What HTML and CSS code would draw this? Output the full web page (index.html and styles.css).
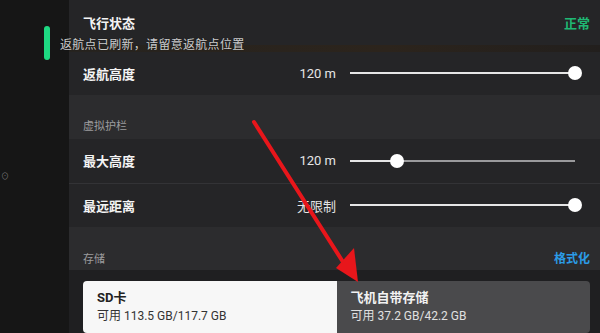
FILE: index.html
```html
<!DOCTYPE html>
<html lang="zh-CN">
<head>
    <meta charset="UTF-8">
    <meta name="viewport" content="width=device-width, initial-scale=1.0">
    <title>安全设置</title>
    <link rel="stylesheet" href="styles.css">
</head>
<body>
    <div class="screen">
        <div class="sidebar">
            <div class="sidebar_mark">⊙</div>
        </div>
        <div class="panel">
            <div class="row status_row">
                <div class="label">飞行状态</div>
                <div class="status">正常</div>
            </div>
            <div class="row_gap"></div>
            <div class="row">
                <div class="label">返航高度</div>
                <div class="value">120 m</div>
                <div class="slider">
                    <div class="track"></div>
                    <div class="fill" style="width: 100%"></div>
                    <div class="thumb" style="left: 100%"></div>
                </div>
            </div>
            <div class="section_head">
                <div class="section_title">虚拟护栏</div>
            </div>
            <div class="row row_line">
                <div class="label">最大高度</div>
                <div class="value">120 m</div>
                <div class="slider">
                    <div class="track"></div>
                    <div class="fill" style="width: 21%"></div>
                    <div class="thumb" style="left: 21%"></div>
                </div>
            </div>
            <div class="row">
                <div class="label">最远距离</div>
                <div class="value">无限制</div>
                <div class="slider">
                    <div class="track"></div>
                    <div class="fill" style="width: 100%"></div>
                    <div class="thumb" style="left: 100%"></div>
                </div>
            </div>
            <div class="section_head storage_head">
                <div class="section_title">存储</div>
                <div class="format">格式化</div>
            </div>
            <div class="storage">
                <div class="seg seg_active">
                    <div class="seg_title">SD卡</div>
                    <div class="seg_sub">可用 113.5 GB/117.7 GB</div>
                </div>
                <div class="seg">
                    <div class="seg_title">飞机自带存储</div>
                    <div class="seg_sub">可用 37.2 GB/42.2 GB</div>
                </div>
            </div>
        </div>
    </div>

    <!-- toast over the panel -->
    <div class="toast">
        <div class="toast_bar"></div>
        <div class="toast_text">返航点已刷新，请留意返航点位置</div>
    </div>

    <!-- red annotation arrow -->
    <svg class="arrow" width="600" height="333" viewBox="0 0 600 333">
        <line x1="254" y1="122" x2="343" y2="262" stroke="#e8161b" stroke-width="4" stroke-linecap="round"/>
        <polygon points="336,268 354,248 358,282" fill="#e8161b"/>
    </svg>
</body>
</html>
```

FILE: styles.css
```css
body {
    margin: 0;
    width: 600px;
    height: 333px;
    overflow: hidden;
    background-color: #151515;
    font-family: Roboto, "Noto Sans CJK SC", sans-serif;
    color: #f2f2f2;
}

.screen {
    display: flex;
    height: 333px;
}

.sidebar {
    width: 69px;
    background-color: #161616;
    display: flex;
    align-items: center;
}
.sidebar_mark {
    font-size: 8px;
    color: #777;
    margin-left: 1px;
    margin-top: 18px;
}

.panel {
    flex: 1;
    display: flex;
    flex-direction: column;
    background-color: #1f1f21;
}

.row {
    display: flex;
    align-items: center;
    height: 44px;
    padding: 0 8px 0 14px;
    background-color: #252527;
}
.status_row {
    height: 45px;
    padding-right: 10px;
}
.row_gap {
    height: 7px;
    background: linear-gradient(90deg, #26231f, #2c241c 60%, #221f1d);
}
.row_line {
    border-bottom: 1px solid #333336;
}

.label {
    flex: 1;
    font-size: 13px;
    font-weight: 700;
    color: #f4f4f4;
}
.status {
    font-size: 13px;
    font-weight: 700;
    color: #1fb874;
}
.value {
    width: 70px;
    margin-right: 14px;
    text-align: right;
    font-size: 13px;
    color: #e6e6e6;
}

.slider {
    position: relative;
    width: 225px;
    height: 14px;
    margin-right: 17px;
}
.track {
    position: absolute;
    left: 0;
    right: 0;
    top: 6px;
    height: 2px;
    background-color: #9a9a9c;
}
.fill {
    position: absolute;
    left: 0;
    top: 6px;
    height: 2px;
    background-color: #e6e6e6;
}
.thumb {
    position: absolute;
    top: 0;
    width: 14px;
    height: 14px;
    margin-left: -7px;
    border-radius: 50%;
    background-color: #fff;
}

.section_head {
    display: flex;
    align-items: flex-end;
    height: 44px;
    box-sizing: border-box;
    padding: 0 10px 6px 14px;
    background-color: #2c2c2e;
}
.storage_head {
    height: 43px;
    padding-bottom: 4px;
}
.section_title {
    flex: 1;
    font-size: 11px;
    color: #9c9c9e;
}
.format {
    font-size: 12px;
    font-weight: 700;
    color: #2b9be6;
}

.storage {
    display: flex;
    padding: 11px 10px 0 14px;
}
.seg {
    flex: 1;
    height: 45px;
    padding: 7px 14px 0;
    background-color: #4a4a4c;
    border-radius: 0 4px 4px 0;
}
.seg_active {
    background-color: #f7f7f7;
    border-radius: 4px 0 0 4px;
    color: #222;
}
.seg_title {
    font-size: 13px;
    font-weight: 700;
    line-height: 19px;
}
.seg_sub {
    font-size: 12px;
    line-height: 19px;
    color: #e0e0e0;
}
.seg_active .seg_sub {
    color: #333;
}

.toast {
    position: absolute;
    top: 26px;
    left: 44px;
    display: flex;
    align-items: center;
    height: 34px;
}
.toast_bar {
    width: 6px;
    height: 34px;
    border-radius: 3px;
    background-color: #1ed982;
}
.toast_text {
    margin-left: 10px;
    font-size: 12px;
    letter-spacing: 0.3px;
    color: rgba(255, 255, 255, 0.8);
    text-shadow: 0 0 1px rgba(0, 0, 0, 0.6);
}

.arrow {
    position: absolute;
    top: 0;
    left: 0;
    pointer-events: none;
}
```
